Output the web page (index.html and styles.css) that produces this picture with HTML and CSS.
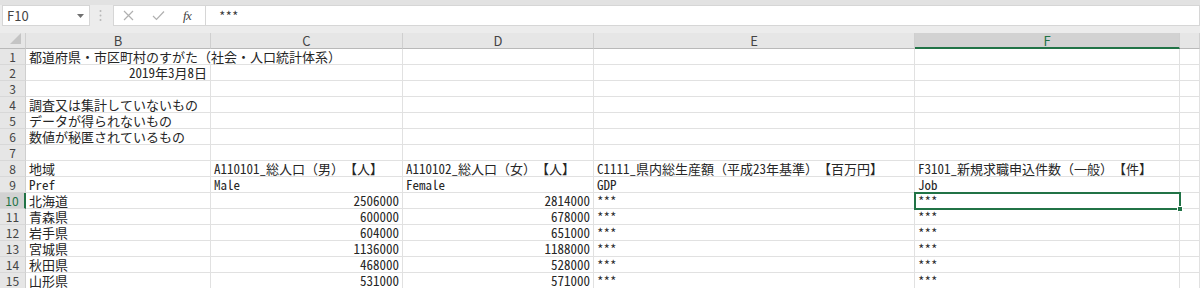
FILE: index.html
```html
<!DOCTYPE html>
<html lang="ja">
<head>
<meta charset="utf-8">
<title>Sheet</title>
<link rel="stylesheet" href="styles.css">
</head>
<body>
<div class="app">
  <div class="fbar">
    <div class="namebox">
      <span class="name">F10</span>
      <svg class="dd" width="7" height="4" viewBox="0 0 7 4"><path d="M0 0h7L3.5 4z" fill="#707070"/></svg>
    </div>
    <svg class="grip" width="3" height="13" viewBox="0 0 3 13"><circle cx="1.5" cy="2" r="1" fill="#b8b8b8"/><circle cx="1.5" cy="6.5" r="1" fill="#b8b8b8"/><circle cx="1.5" cy="11" r="1" fill="#b8b8b8"/></svg>
    <div class="fbtns">
      <svg width="11" height="11" viewBox="0 0 11 11"><path d="M1 1l9 9M10 1l-9 9" stroke="#b0b0b0" stroke-width="1.2" fill="none"/></svg>
      <svg width="13" height="11" viewBox="0 0 13 11"><path d="M1 6l3.5 3.5L12 1.5" stroke="#b0b0b0" stroke-width="1.2" fill="none"/></svg>
      <span class="fx">fx</span>
    </div>
    <div class="finput">***</div>
  </div>

  <div class="sheet">
    <div class="corner"><svg width="12" height="12" viewBox="0 0 12 12"><path d="M11 0v11H0z" fill="#c4c4c4"/></svg></div>
    <div class="ch">B</div><div class="ch">C</div><div class="ch">D</div><div class="ch">E</div><div class="ch sel">F</div><div class="ch"></div>

    <div class="rh">1</div><div class="c span2">都道府県・市区町村のすがた（社会・人口統計体系）</div><div class="c"></div><div class="c"></div><div class="c"></div><div class="c"></div>
    <div class="rh">2</div><div class="c r">2019年3月8日</div><div class="c"></div><div class="c"></div><div class="c"></div><div class="c"></div><div class="c"></div>
    <div class="rh">3</div><div class="c"></div><div class="c"></div><div class="c"></div><div class="c"></div><div class="c"></div><div class="c"></div>
    <div class="rh">4</div><div class="c">調査又は集計していないもの</div><div class="c"></div><div class="c"></div><div class="c"></div><div class="c"></div><div class="c"></div>
    <div class="rh">5</div><div class="c">データが得られないもの</div><div class="c"></div><div class="c"></div><div class="c"></div><div class="c"></div><div class="c"></div>
    <div class="rh">6</div><div class="c">数値が秘匿されているもの</div><div class="c"></div><div class="c"></div><div class="c"></div><div class="c"></div><div class="c"></div>
    <div class="rh">7</div><div class="c"></div><div class="c"></div><div class="c"></div><div class="c"></div><div class="c"></div><div class="c"></div>
    <div class="rh">8</div><div class="c">地域</div><div class="c">A110101_総人口（男）【人】</div><div class="c">A110102_総人口（女）【人】</div><div class="c">C1111_県内総生産額（平成23年基準）【百万円】</div><div class="c">F3101_新規求職申込件数（一般）【件】</div><div class="c"></div>
    <div class="rh">9</div><div class="c">Pref</div><div class="c">Male</div><div class="c">Female</div><div class="c">GDP</div><div class="c">Job</div><div class="c"></div>
    <div class="rh sel">10</div><div class="c">北海道</div><div class="c r">2506000</div><div class="c r">2814000</div><div class="c">***</div><div class="c active">***<span class="handle"></span></div><div class="c"></div>
    <div class="rh">11</div><div class="c">青森県</div><div class="c r">600000</div><div class="c r">678000</div><div class="c">***</div><div class="c">***</div><div class="c"></div>
    <div class="rh">12</div><div class="c">岩手県</div><div class="c r">604000</div><div class="c r">651000</div><div class="c">***</div><div class="c">***</div><div class="c"></div>
    <div class="rh">13</div><div class="c">宮城県</div><div class="c r">1136000</div><div class="c r">1188000</div><div class="c">***</div><div class="c">***</div><div class="c"></div>
    <div class="rh">14</div><div class="c">秋田県</div><div class="c r">468000</div><div class="c r">528000</div><div class="c">***</div><div class="c">***</div><div class="c"></div>
    <div class="rh">15</div><div class="c">山形県</div><div class="c r">531000</div><div class="c r">571000</div><div class="c">***</div><div class="c">***</div><div class="c"></div>
  </div>
</div>
</body>
</html>
```

FILE: styles.css
```css
* { box-sizing: border-box; }
html, body { margin: 0; padding: 0; background: #ffffff; }
body { width: 1200px; height: 288px; overflow: hidden; }

.app {
  font-family: "Noto Sans Mono CJK JP", "Noto Sans CJK JP", sans-serif;
  font-size: 13px;
  color: #262626;
  text-spacing-trim: space-all;
}

/* formula bar */
.fbar {
  height: 33px;
  background: #ececec;
  border-top: 5px solid #e2e2e2;
  display: flex;
  align-items: flex-start;
}
.namebox {
  width: 88px;
  height: 21px;
  margin-left: 2px;
  background: #ffffff;
  border: 1px solid #d6d6d6;
  display: flex;
  align-items: center;
  justify-content: space-between;
  padding: 0 5px 0 4px;
}
.name {
  font-family: "Noto Sans CJK JP", sans-serif;
  font-size: 13px;
  color: #444;
}
.dd { display: block; }
.grip { margin: 4px 0 0 9px; display: block; }
.fbtns {
  margin-left: 11px;
  width: 92px;
  height: 21px;
  background: #ffffff;
  border: 1px solid #d6d6d6;
  border-right: none;
  display: flex;
  align-items: center;
  gap: 18px;
  padding-left: 9px;
}
.fbtns svg { display: block; }
.fx {
  font-family: "Liberation Serif", serif;
  font-style: italic;
  font-size: 13px;
  color: #444;
  letter-spacing: -0.5px;
}
.finput {
  flex: 1;
  height: 21px;
  background: #ffffff;
  border: 1px solid #d6d6d6;
  line-height: 19px;
  padding-left: 13px;
  color: #333;
}

/* sheet grid */
.sheet {
  display: grid;
  grid-template-columns: 26px 185px 192px 191px 321px 265px 20px;
  grid-auto-rows: 16px;
}
.corner {
  background: #e6e6e6;
  border-right: 1px solid #cfcfcf;
  border-bottom: 1px solid #b9b9b9;
  display: flex;
  align-items: flex-end;
  justify-content: flex-end;
  padding: 0 3px 3px 0;
}
.corner svg { display: block; }
.ch {
  background: #e6e6e6;
  border-right: 1px solid #cfcfcf;
  border-bottom: 1px solid #b9b9b9;
  text-align: center;
  line-height: 15px;
  font-family: "Noto Sans CJK JP", sans-serif;
  font-size: 13px;
  color: #444;
}
.ch.sel {
  background: #d2d2d2;
  color: #217346;
  border-bottom: 2px solid #217346;
}
.rh {
  background: #e6e6e6;
  border-right: 1px solid #cfcfcf;
  border-bottom: 1px solid #d8d8d8;
  text-align: center;
  line-height: 15px;
  font-family: "Noto Sans CJK JP", sans-serif;
  font-size: 12px;
  color: #444;
}
.rh.sel {
  background: #d2d2d2;
  color: #217346;
  border-right: 2px solid #217346;
}
.c {
  border-right: 1px solid #e1e1e1;
  border-bottom: 1px solid #e1e1e1;
  padding: 0 2px 0 3px;
  line-height: 15px;
  white-space: nowrap;
  background: #ffffff;
}
.c.span2 { grid-column: span 2; }
.c.r { text-align: right; padding-right: 3px; }
.c.active {
  position: relative;
  outline: 2px solid #217346;
  outline-offset: -1px;
  z-index: 1;
}
.handle {
  position: absolute;
  right: -4px;
  bottom: -4px;
  width: 6px;
  height: 6px;
  background: #217346;
  border: 1px solid #ffffff;
}
```
